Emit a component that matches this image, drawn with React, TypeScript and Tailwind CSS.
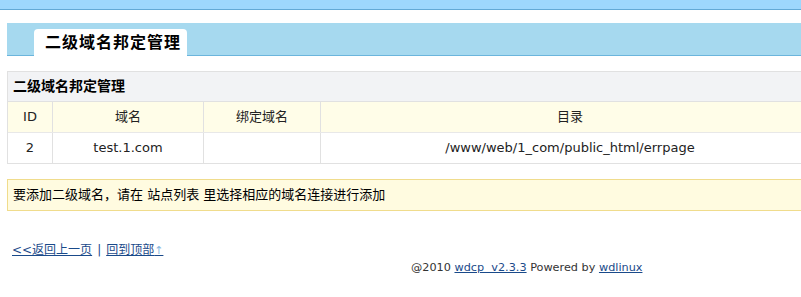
const font = { fontFamily: '"DejaVu Sans", Verdana, "Noto Sans CJK SC", sans-serif' }

export default function App() {
  return (
    <div className="h-[297px] w-[801px] overflow-hidden bg-white text-[13px] text-[#222]" style={font}>
      {/* top strip */}
      <div className="h-[10px] border-b border-[#62a9d6] bg-[#9dd7fd]" />

      {/* tab band */}
      <div className="mt-[13px] ml-[7px] flex h-[33px] w-[830px] items-end border-b border-[#6bb5dc] bg-[#a6d9ef] pl-[27px]">
        <div className="-mb-px flex h-[27px] w-[153px] items-center rounded-t-[4px] bg-white pl-[11px] text-[16px] font-bold tracking-[1px] text-black">
          二级域名邦定管理
        </div>
      </div>

      {/* table */}
      <div className="mt-[15px] ml-[7px] w-[813px] border border-[#e1e1e1]">
        <div className="flex h-[30px] items-center border-b border-[#e1e1e1] bg-[#f2f3f5] pl-[5px] text-[14px] font-bold text-black">
          二级域名邦定管理
        </div>
        <div className="grid h-[31px] grid-cols-[45px_151px_117px_1fr] items-stretch border-b border-[#e8e8e8] bg-[#fffde8]">
          <div className="flex items-center justify-center border-r border-[#e1e1e1]">ID</div>
          <div className="flex items-center justify-center border-r border-[#e1e1e1]">域名</div>
          <div className="flex items-center justify-center border-r border-[#e1e1e1]">绑定域名</div>
          <div className="flex items-center justify-center">目录</div>
        </div>
        <div className="grid h-[30px] grid-cols-[45px_151px_117px_1fr] items-stretch bg-white">
          <div className="flex items-center justify-center border-r border-[#e1e1e1]">2</div>
          <div className="flex items-center justify-center border-r border-[#e1e1e1]">test.1.com</div>
          <div className="flex items-center justify-center border-r border-[#e1e1e1]" />
          <div className="flex items-center justify-center">/www/web/1_com/public_html/errpage</div>
        </div>
      </div>

      {/* notice */}
      <div className="mt-[15px] ml-[7px] flex h-[32px] w-[813px] items-center border border-[#f0dc8c] bg-[#fffbe0] pl-[5px] text-black">
        要添加二级域名，请在 站点列表 里选择相应的域名连接进行添加
      </div>

      {/* back links */}
      <div className="mt-[30px] ml-[12px] flex items-center text-[12px] text-[#1a4a8a]">
        <a href="#" className="underline">&lt;&lt;返回上一页</a>
        <span className="mx-[5px]">|</span>
        <a href="#" className="underline">
          回到顶部<span className="text-[11px] text-[#8ab8e0]">↑</span>
        </a>
      </div>

      {/* footer */}
      <div className="mt-0 pl-[411px] text-[11.25px] text-[#333]">
        @2010{' '}
        <a href="#" className="text-[#1a4a8a] underline">wdcp&nbsp; v2.3.3</a> Powered by{' '}
        <a href="#" className="text-[#1a4a8a] underline">wdlinux</a>
      </div>
    </div>
  )
}
